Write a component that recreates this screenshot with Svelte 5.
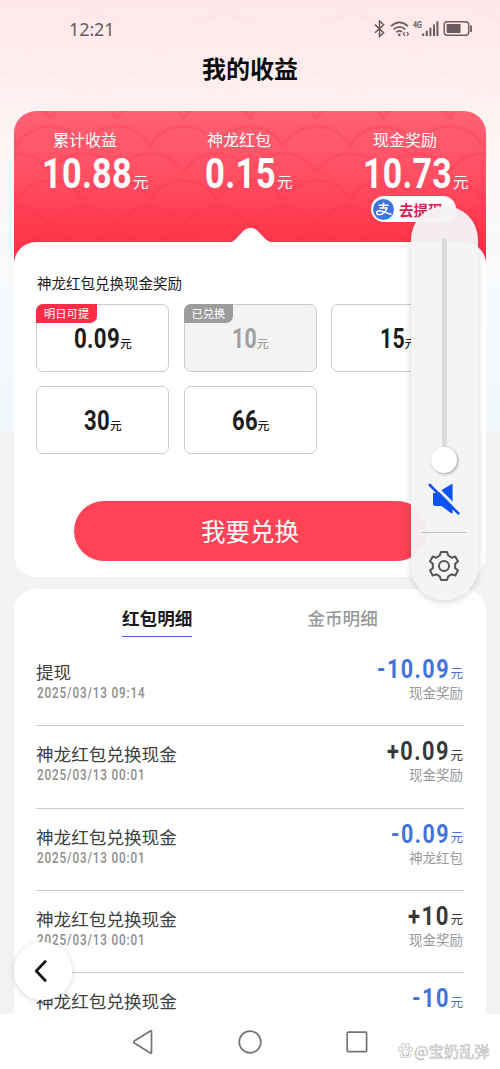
<script>
  const totals = [
    { label: '累计收益', value: '10.88', width: 90 },
    { label: '神龙红包', value: '0.15', width: 71 },
    { label: '现金奖励', value: '10.73', width: 89 },
  ];

  const options = [
    { value: '0.09', width: 46, tag: '明日可提' },
    { value: '10', width: 25, tag: '已兑换', disabled: true },
    { value: '15', width: 25 },
    { value: '30', width: 26 },
    { value: '66', width: 26 },
  ];

  const records = [
    { title: '提现', time: '2025/03/13 09:14', value: '-10.09', width: 73, kind: '现金奖励' },
    { title: '神龙红包兑换现金', time: '2025/03/13 00:01', value: '+0.09', width: 63, kind: '现金奖励' },
    { title: '神龙红包兑换现金', time: '2025/03/13 00:01', value: '-0.09', width: 59, kind: '神龙红包' },
    { title: '神龙红包兑换现金', time: '2025/03/13 00:01', value: '+10', width: 42, kind: '现金奖励' },
    { title: '神龙红包兑换现金', time: '2025/03/13 00:01', value: '-10', width: 38, kind: '现金奖励' },
  ];

  let tab = $state(0);
  const tabs = ['红包明细', '金币明细'];
</script>

<!-- narrow digits: cap height is the svg height, so it sits on the text baseline -->
{#snippet num(value, width, height)}
  <svg class="num" {width} {height}>
    <text x="0" y={height} font-size={height / 0.711} textLength={width} lengthAdjust="spacingAndGlyphs">{value}</text>
  </svg>
{/snippet}

<div class="screen">
  <svg class="backdrop" width="500" height="110">
    <defs>
      <pattern id="waves" width="130" height="104" patternUnits="userSpaceOnUse" x="28" y="14">
        <path d="M0 41A74 74 0 0 1 130 41M-65 93A74 74 0 0 1 65 93M65 93A74 74 0 0 1 195 93" fill="none" stroke="#f7dcdf" stroke-width="4" />
      </pattern>
    </defs>
    <rect width="500" height="100" fill="url(#waves)" opacity="0.14" />
  </svg>

  <header class="status">
    <span class="clock">12:21</span>
    <svg width="98" height="18" viewBox="0 0 98 18" fill="none" stroke="#6a5c5e">
      <path d="M1 4.6L9.6 12.8L5.5 16.4V1L9.6 4.7L1 12.8" stroke-width="1.5" />
      <path d="M17 6.2Q25.5 -1.4 34 6.2M19.7 9.4Q25.5 4.4 31.3 9.4M22.3 12.2Q25.5 9.7 28 12" stroke-width="1.8" />
      <circle cx="25.3" cy="14.8" r="1.4" fill="#6a5c5e" stroke="none" />
      <path d="M31 12.2L29.2 14L31 15.8M32.8 12.2L34.6 14L32.8 15.8" stroke-width="1.1" />
      <text x="39" y="7.5" class="net" textLength="9" lengthAdjust="spacingAndGlyphs">4G</text>
      <path d="M49.2 16V13.6M52.8 16V10.7M56.4 16V7.8M60 16V4.6M63.4 16V1.2" stroke-width="2" />
      <rect x="70.2" y="1.7" width="24.5" height="13.6" rx="3" stroke-width="1.4" />
      <rect x="72.6" y="4" width="14" height="9" rx="1" fill="#6a5c5e" stroke="none" />
      <path d="M97 5.2V12" stroke-width="1.8" />
    </svg>
  </header>

  <h1>我的收益</h1>

  <section class="card wallet">
    <div class="totals">
      <svg class="scales" width="472" height="153">
        <defs>
          <pattern id="scales" width="66.6" height="54" patternUnits="userSpaceOnUse" x="36" y="-13">
            <path d="M0 21A38 38 0 0 1 66.6 21M-33.3 48A38 38 0 0 1 33.3 48M33.3 48A38 38 0 0 1 99.9 48" fill="none" stroke="#f22c45" stroke-width="3.2" />
          </pattern>
        </defs>
        <rect width="472" height="153" fill="url(#scales)" opacity="0.22" />
      </svg>
      {#each totals as item, i}
        <div class="total">
          <span class="label">{item.label}</span>
          <span class="amount">{@render num(item.value, item.width, 30)}<i>元</i></span>
          {#if i === 2}
            <span class="withdraw">
              <svg width="21" height="21" viewBox="0 0 21 21">
                <circle cx="10.5" cy="10.5" r="10.5" fill="#3f74e0" />
                <path d="M5.5 6.2H15.5M10.5 3.5V9M6.5 9H14C13 12.3 9.8 15.8 6.2 15.8C2.7 15.8 3 11.8 6.4 11.8C9.8 11.8 13 14 18.5 15.4" fill="none" stroke="#fff" stroke-width="1.5" />
              </svg>
              <b>去提现</b>
            </span>
          {/if}
        </div>
      {/each}
    </div>

    <div class="exchange">
      <svg class="notch" width="50" height="17" viewBox="0 0 50 17">
        <path d="M0 16C6 16 8.5 13.5 11.5 10L18 3.3Q24.5 -2 31 3.3L37.5 10C41 13.5 44 16 50 16V17H0Z" fill="#fff" />
      </svg>
      <h2>神龙红包兑换现金奖励</h2>
      <div class="options">
        {#each options as option}
          <button class="option" class:disabled={option.disabled}>
            {#if option.tag}<span class="tag">{option.tag}</span>{/if}
            <span class="price">{@render num(option.value, option.width, 20)}<i>元</i></span>
          </button>
        {/each}
      </div>
      <button class="submit">我要兑换</button>
    </div>
  </section>

  <section class="card details">
    <div class="tabs">
      {#each tabs as name, i}
        <button class="tab" class:active={tab === i} onclick={() => (tab = i)}>{name}</button>
      {/each}
    </div>
    {#each records as record}
      <div class="record">
        <div class="info">
          <span class="title">{record.title}</span>
          <time>{@render num(record.time, 108.5, 9.8)}</time>
        </div>
        <div class="change" class:out={record.value.startsWith('-')}>
          <span class="sum">{@render num(record.value, record.width, 18.5)}<i>元</i></span>
          <span class="kind">{record.kind}</span>
        </div>
      </div>
    {/each}
  </section>

  <nav>
    <svg width="22" height="26" viewBox="0 0 22 26"><path d="M19.5 2.5V23.5Q19.5 24.6 18.3 24L2.3 14Q1 13 2.3 12L18.3 2Q19.5 1.4 19.5 2.5Z" /></svg>
    <svg width="26" height="26" viewBox="0 0 26 26"><circle cx="13" cy="13" r="10.8" /></svg>
    <svg width="22" height="22" viewBox="0 0 22 22"><rect x="1.2" y="1.2" width="19.4" height="19.4" rx="1" /></svg>
  </nav>

  <div class="watermark">
    <svg width="15" height="15" viewBox="0 0 15 15">
      <g fill="#fff" stroke="#b8b8b8" stroke-width="0.8">
        <ellipse cx="2.4" cy="6.4" rx="1.8" ry="2.2" />
        <ellipse cx="5.4" cy="2.9" rx="1.8" ry="2.3" />
        <ellipse cx="9.6" cy="2.9" rx="1.8" ry="2.3" />
        <ellipse cx="12.6" cy="6.4" rx="1.8" ry="2.2" />
        <path d="M7.5 6.5C9.5 6.5 10 9 12 10.5C13.8 12 12.8 14.5 10.5 14.4Q7.5 13.8 4.5 14.4C2.2 14.5 1.2 12 3 10.5C5 9 5.5 6.5 7.5 6.5Z" />
      </g>
      <path d="M5 10V12.5H7M8.5 10V12.5H10.5V10" fill="none" stroke="#aaa" stroke-width="0.8" />
    </svg>
    <span>@宝奶乱弹</span>
  </div>

  <button class="back" aria-label="返回">
    <svg width="14" height="24" viewBox="0 0 14 24"><path d="M12 1.8L2.2 12L12 22.2" fill="none" stroke="#111" stroke-width="2.7" stroke-linejoin="round" /></svg>
  </button>

  <aside class="volume">
    <div class="track"></div>
    <div class="thumb"></div>
    <svg class="mute" width="32" height="32" viewBox="0 0 32 32">
      <path d="M5.5 10H9L24 0.8Q24.6 1.2 24.6 2V29Q24.6 31.2 22.8 30L13.5 23H7Q5 23 5 21V10Z" fill="#0d52f2" />
      <path d="M3 -1L32 28" stroke="#f4f4f5" stroke-width="3" />
      <path d="M1.8 2L30.4 30.4" stroke="#0d52f2" stroke-width="2.6" stroke-linecap="round" />
    </svg>
    <hr />
    <svg width="30" height="32" viewBox="-15 -16 30 32" fill="none" stroke="#555" stroke-width="2" stroke-linejoin="round">
      <path d="M-3 -14H3L4.3 -10.3Q6 -9.6 7.5 -8.3L11.3 -9.5L14 -4.6L11 -2Q11.5 0 11 2L14 4.6L11.3 9.5L7.5 8.3Q6 9.6 4.3 10.3L3 14H-3L-4.3 10.3Q-6 9.6 -7.5 8.3L-11.3 9.5L-14 4.6L-11 2Q-11.5 0 -11 -2L-14 -4.6L-11.3 -9.5L-7.5 -8.3Q-6 -9.6 -4.3 -10.3Z" />
      <circle r="5" />
    </svg>
  </aside>
</div>

<style>
  :global(body) {
    margin: 0;
  }

  * {
    box-sizing: border-box;
  }

  .screen {
    position: relative;
    display: flex;
    flex-direction: column;
    width: 500px;
    height: 1069px;
    overflow: hidden;
    font-family: "Noto Sans CJK SC", sans-serif;
    color: #1c1c1c;
    background: linear-gradient(#ffe7e9 0, #fff1f1 100px, #fdf7f7 180px, #f7fafc 290px, #eff7fb 430px, #f3f3f3 431px);
  }

  button {
    padding: 0;
    border: 0;
    background: none;
    font-family: inherit;
    color: inherit;
  }

  i {
    font-style: normal;
  }

  .num {
    overflow: visible;
    fill: currentColor;
    font-family: Roboto, sans-serif;
    font-weight: 700;
    letter-spacing: 0.4px;
  }

  .backdrop {
    position: absolute;
    top: 0;
    left: 0;
  }

  .status {
    position: relative;
    display: flex;
    justify-content: space-between;
    align-items: center;
    height: 40px;
    padding: 18px 28px 0 69px;
  }

  .clock {
    font: 18px/20px "Noto Sans", sans-serif;
    letter-spacing: -0.1px;
    color: #6a5c5e;
  }

  .net {
    font: 700 8.5px Roboto, sans-serif;
    fill: #6a5c5e;
    stroke: none;
  }

  h1 {
    position: relative;
    margin: 10px 0 25px;
    font-size: 24px;
    font-weight: 700;
    line-height: 36px;
    text-align: center;
    color: #0c0c0c;
  }

  .card {
    flex: none;
    margin: 0 14px;
    border-radius: 22px;
    background: #fff;
    overflow: hidden;
  }

  .wallet {
    height: 466px;
  }

  .totals {
    position: relative;
    display: grid;
    grid-template-columns: 163px 158px 106px;
    height: 153px;
    padding: 16px 0 0 28px;
    color: #fff;
    background: linear-gradient(#ff6273 0, #ff5064 60px, #ff3c50 110px, #fb2f45 153px);
  }

  .scales {
    position: absolute;
    top: 0;
    left: 0;
  }

  .total {
    position: relative;
    display: flex;
    flex-direction: column;
    align-items: flex-start;
  }

  .label {
    padding-left: 11px;
    font-size: 16px;
    line-height: 24px;
  }

  .total:nth-of-type(2) .label {
    padding-left: 2px;
  }

  .total:nth-of-type(3) .label {
    padding-left: 10px;
  }

  .amount {
    display: flex;
    align-items: baseline;
    gap: 1px;
    height: 44px;
    padding-top: 7px;
    font-size: 15.5px;
    line-height: 20px;
  }

  .withdraw {
    display: flex;
    align-items: center;
    gap: 5px;
    width: 85px;
    height: 26px;
    margin: 1px 0 0 8px;
    padding-left: 2px;
    border-radius: 13px;
    background: #fff;
    font-size: 14.5px;
    color: #d81e57;
  }

  .exchange {
    position: relative;
    height: 335px;
    margin-top: -22px;
    padding: 27px 22px 0;
    border-radius: 22px;
    background: #fff;
  }

  .notch {
    position: absolute;
    top: -15px;
    left: 212px;
  }

  h2 {
    margin: 0 0 7px 1px;
    font-size: 14.5px;
    font-weight: 400;
    line-height: 28px;
  }

  .options {
    display: grid;
    grid-template-columns: repeat(3, 133px);
    gap: 14px 14.5px;
  }

  .option {
    position: relative;
    display: flex;
    align-items: center;
    justify-content: center;
    height: 68px;
    border: 1px solid #ccc;
    border-radius: 7px;
  }

  .price {
    display: flex;
    align-items: baseline;
    margin: 2px 0 0 1px;
    font-size: 11.8px;
    font-weight: 500;
    line-height: 16px;
  }

  .disabled {
    background: #f3f3f3;
    color: #a0a0a0;
  }

  .tag {
    position: absolute;
    top: -1px;
    left: -1px;
    padding: 0 8px;
    border-radius: 7px 0 7px 0;
    background: #fb2c45;
    font-size: 11.3px;
    line-height: 19px;
    color: #fff;
  }

  .disabled .tag {
    background: #9c9c9c;
  }

  .submit {
    display: block;
    width: 353px;
    height: 60px;
    margin: 47px auto 0;
    border-radius: 30px;
    background: #ff4356;
    font-size: 24.5px;
    line-height: 58px;
    color: #fff;
  }

  .details {
    height: 425px;
    margin-top: 12px;
    padding: 0 22px;
    border-radius: 22px 22px 0 0;
  }

  .tabs {
    display: flex;
    gap: 115px;
    height: 55px;
    padding: 15px 0 0 86px;
  }

  .tab {
    height: 33px;
    padding-bottom: 4px;
    border-bottom: 1.5px solid transparent;
    font-size: 17.6px;
    font-weight: 500;
    line-height: 28px;
    color: #999;
  }

  .active {
    border-color: #4468d4;
    font-weight: 700;
    color: #1c1c1c;
  }

  .record {
    display: flex;
    justify-content: space-between;
    height: 82.3px;
    border-bottom: 1px solid #ccc;
  }

  .info,
  .change {
    display: flex;
    flex-direction: column;
    height: 81px;
    padding-top: 15px;
  }

  .title {
    font-size: 17.6px;
    line-height: 26px;
    color: #404040;
  }

  time {
    display: flex;
    padding: 3px 0 0 1px;
    color: #8c8c8c;
  }

  time :global(.num) {
    font-weight: 500;
    letter-spacing: 1px;
  }

  .change {
    align-items: flex-end;
    padding-right: 1px;
    color: #383838;
  }

  .out {
    color: #4472dc;
  }

  .sum {
    display: flex;
    align-items: baseline;
    height: 23px;
    font-size: 12.5px;
    line-height: 18px;
  }

  .sum :global(.num) {
    letter-spacing: 1.8px;
  }

  .kind {
    font-size: 13.5px;
    line-height: 20px;
    color: #999;
  }

  nav {
    position: relative;
    display: flex;
    flex: 1;
    align-items: center;
    justify-content: center;
    gap: 83px;
    background: #fff;
  }

  nav svg {
    fill: none;
    stroke: #757575;
    stroke-width: 1.7;
  }

  .watermark {
    position: absolute;
    top: 1039px;
    left: 398px;
    display: flex;
    align-items: center;
    gap: 1px;
    font-size: 15.3px;
    line-height: 22px;
    color: #fff;
    -webkit-text-stroke: 0.6px #b8b8b8;
  }

  .back {
    position: absolute;
    top: 942px;
    left: 14px;
    display: flex;
    align-items: center;
    width: 58px;
    height: 58px;
    padding-left: 20px;
    border-radius: 50%;
    background: rgba(255, 255, 255, 0.98);
    box-shadow: 0 1px 6px rgba(0, 0, 0, 0.16);
  }

  .volume {
    position: absolute;
    top: 206px;
    left: 411px;
    display: flex;
    flex-direction: column;
    align-items: center;
    width: 67px;
    height: 394px;
    padding: 32px 1px 0 0;
    border-radius: 34px;
    background: rgba(244, 244, 245, 0.96);
    box-shadow: 0 2px 7px rgba(0, 0, 0, 0.16);
  }

  .track {
    width: 5px;
    height: 209px;
    border-radius: 3px;
    background: #dcdcdc;
  }

  .thumb {
    width: 26px;
    height: 26px;
    border-radius: 50%;
    background: #fff;
    box-shadow: 1px 1px 3px rgba(0, 0, 0, 0.35);
  }

  .mute {
    margin-top: 10px;
  }

  hr {
    width: 44px;
    margin: 17px 0;
    border: 0;
    border-top: 1px solid #bbb;
  }
</style>
